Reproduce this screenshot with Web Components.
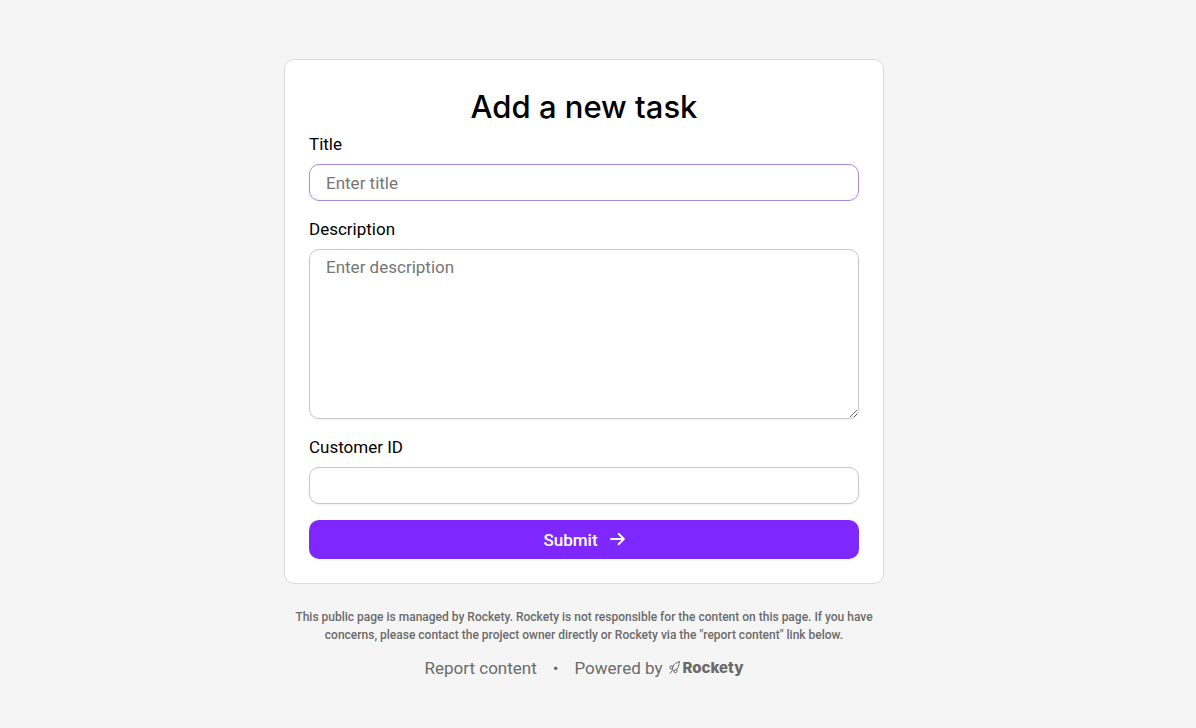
<!DOCTYPE html>
<html lang="en">
<head>
<meta charset="utf-8">
<meta name="viewport" content="width=device-width, initial-scale=1">
<title>Add a new task</title>
<style>
body {
  margin: 0;
  background: #F5F5F5;
  color: #000000;
  font-family: Roboto, 'Liberation Sans', sans-serif;
  font-size: 17px;
  line-height: 24px;
}
</style>
</head>
<body>
<task-page></task-page>

<script>
// Card that holds the form, with a heading slot above the fields.
const CARD_TEMPLATE = document.createElement('template');
CARD_TEMPLATE.innerHTML = `
<style>
:host {
  display: block;
  padding: 24px;
  background: #FFFFFF;
  border: 1px solid #DADADA;
  border-radius: 10px;
}
h1 {
  margin: 0 0 2px;
  font-family: Inter, 'Liberation Sans', sans-serif;
  font-size: 31px;
  font-weight: 500;
  line-height: 46px;
  text-align: center;
}
</style>
<h1><slot name="heading"></slot></h1>
<slot></slot>
`;

class FormCard extends HTMLElement {
  constructor() {
    super();
    this.attachShadow({ mode: 'open' });
    this.shadowRoot.appendChild(CARD_TEMPLATE.content.cloneNode(true));
  }
}

customElements.define('form-card', FormCard);

// Labelled text field; the multiline attribute swaps the input for a textarea.
const FIELD_TEMPLATE = document.createElement('template');
FIELD_TEMPLATE.innerHTML = `
<style>
:host {
  display: flex;
  flex-direction: column;
  gap: 8px;
}
input, textarea {
  display: block;
  box-sizing: border-box;
  width: 100%;
  height: 37px;
  margin: 0;
  padding: 5px 16px;
  border: 1px solid #C8C8C8;
  border-radius: 10px;
  outline: none;
  background: #FFFFFF;
  box-shadow: 0 1px 2px rgba(0,0,0,0.06);
  color: inherit;
  font: inherit;
}
textarea { height: 170px; resize: vertical; }
:host([active]) input, input:focus, textarea:focus {
  border-color: #A987E8;
  box-shadow: none;
}
::placeholder { color: #757575; opacity: 1; }
</style>
<label for="control"></label>
`;

class FormField extends HTMLElement {
  constructor() {
    super();
    this.attachShadow({ mode: 'open' });
    this.shadowRoot.appendChild(FIELD_TEMPLATE.content.cloneNode(true));
    this._labelEl = this.shadowRoot.querySelector('label');
  }
  connectedCallback() {
    if (this._control) return;
    this._control = document.createElement(this.hasAttribute('multiline') ? 'textarea' : 'input');
    this._control.id = 'control';
    this._control.name = this.getAttribute('name') || '';
    this._control.placeholder = this.getAttribute('placeholder') || '';
    this._labelEl.textContent = this.getAttribute('label') || '';
    this.shadowRoot.appendChild(this._control);
  }
  get value() { return this._control ? this._control.value : ''; }
}

customElements.define('form-field', FormField);

const SUBMIT_TEMPLATE = document.createElement('template');
SUBMIT_TEMPLATE.innerHTML = `
<style>
:host { display: block; }
button {
  display: flex;
  align-items: center;
  justify-content: center;
  gap: 12px;
  width: 100%;
  height: 39px;
  padding: 0 16px;
  border: 0;
  border-radius: 10px;
  background: #7F27FF;
  color: #FFFFFF;
  font: inherit;
  font-weight: 500;
  cursor: pointer;
}
button:hover { background: #6D18F0; }
svg { width: 15px; height: 15px; display: block; }
</style>
<button type="button">
  <slot></slot>
  <svg viewBox="0 0 15 15" fill="none" stroke="currentColor" stroke-width="1.9"
    stroke-linecap="round" stroke-linejoin="round" aria-hidden="true">
    <path d="M1 7H13.8M8.6 1.8L13.9 7L8.6 12.2"/>
  </svg>
</button>
`;

class SubmitButton extends HTMLElement {
  constructor() {
    super();
    this.attachShadow({ mode: 'open' });
    this.shadowRoot.appendChild(SUBMIT_TEMPLATE.content.cloneNode(true));
  }
}

customElements.define('submit-button', SubmitButton);

const BRAND_TEMPLATE = document.createElement('template');
BRAND_TEMPLATE.innerHTML = `
<style>
:host {
  display: inline-flex;
  align-items: center;
  gap: 3px;
  font-family: Inter, 'Liberation Sans', sans-serif;
  font-size: 15px;
  font-weight: 800;
}
svg { width: 11px; height: 14px; display: block; }
</style>
<svg viewBox="0 0 11 14" fill="none" stroke="currentColor"
  stroke-linecap="round" stroke-linejoin="round" aria-hidden="true">
  <path d="M10.2 .8C7.4 1.5 5.2 3 4 5.2L3.2 8.6L4.6 9.8L7.8 8.3C9.4 6.3 10.3 3.7 10.2 .8Z"/>
  <path d="M4 5.2L1.6 4.9L.8 7.2L3.2 8.6M7.8 8.3L8.1 10.8L6.1 12L4.6 9.8M3 10L1 12.4"/>
</svg>
<span>Rockety</span>
`;

class RocketyBrand extends HTMLElement {
  constructor() {
    super();
    this.attachShadow({ mode: 'open' });
    this.shadowRoot.appendChild(BRAND_TEMPLATE.content.cloneNode(true));
  }
}

customElements.define('rockety-brand', RocketyBrand);

const FOOTER_TEMPLATE = document.createElement('template');
FOOTER_TEMPLATE.innerHTML = `
<style>
:host {
  display: flex;
  flex-direction: column;
  gap: 12px;
  color: #6B6B6B;
  text-align: center;
}
p { margin: 0; font-size: 12px; font-weight: 500; line-height: 18px; }
nav {
  display: flex;
  flex-wrap: wrap;
  align-items: center;
  justify-content: center;
  gap: 16px;
}
a { color: inherit; text-decoration: none; }
a:hover { text-decoration: underline; }
.powered { display: flex; align-items: center; gap: 6px; }
</style>
<p><slot></slot></p>
<nav>
  <a href="#report">Report content</a>
  <span>•</span>
  <a class="powered" href="#rockety">Powered by <rockety-brand></rockety-brand></a>
</nav>
`;

class PageFooter extends HTMLElement {
  constructor() {
    super();
    this.attachShadow({ mode: 'open' });
    this.shadowRoot.appendChild(FOOTER_TEMPLATE.content.cloneNode(true));
  }
}

customElements.define('page-footer', PageFooter);

const PAGE_TEMPLATE = document.createElement('template');
PAGE_TEMPLATE.innerHTML = `
<style>
:host {
  display: block;
  padding: 59px 44px 44px 16px;
}
main {
  display: flex;
  flex-direction: column;
  gap: 24px;
  max-width: 600px;
  margin: 0 auto;
}
form {
  display: flex;
  flex-direction: column;
  gap: 16px;
}
</style>
<main>
  <form-card>
    <span slot="heading">Add a new task</span>
    <form>
      <form-field name="title" label="Title" placeholder="Enter title" active></form-field>
      <form-field name="description" label="Description" placeholder="Enter description" multiline></form-field>
      <form-field name="customer" label="Customer ID"></form-field>
      <submit-button>Submit</submit-button>
    </form>
  </form-card>
  <page-footer>This public page is managed by Rockety. Rockety is not responsible for the content on this page. If you have concerns, please contact the project owner directly or Rockety via the "report content" link below.</page-footer>
</main>
`;

class TaskPage extends HTMLElement {
  constructor() {
    super();
    this.attachShadow({ mode: 'open' });
    this.shadowRoot.appendChild(PAGE_TEMPLATE.content.cloneNode(true));
  }
}

customElements.define('task-page', TaskPage);
</script>
</body>
</html>
